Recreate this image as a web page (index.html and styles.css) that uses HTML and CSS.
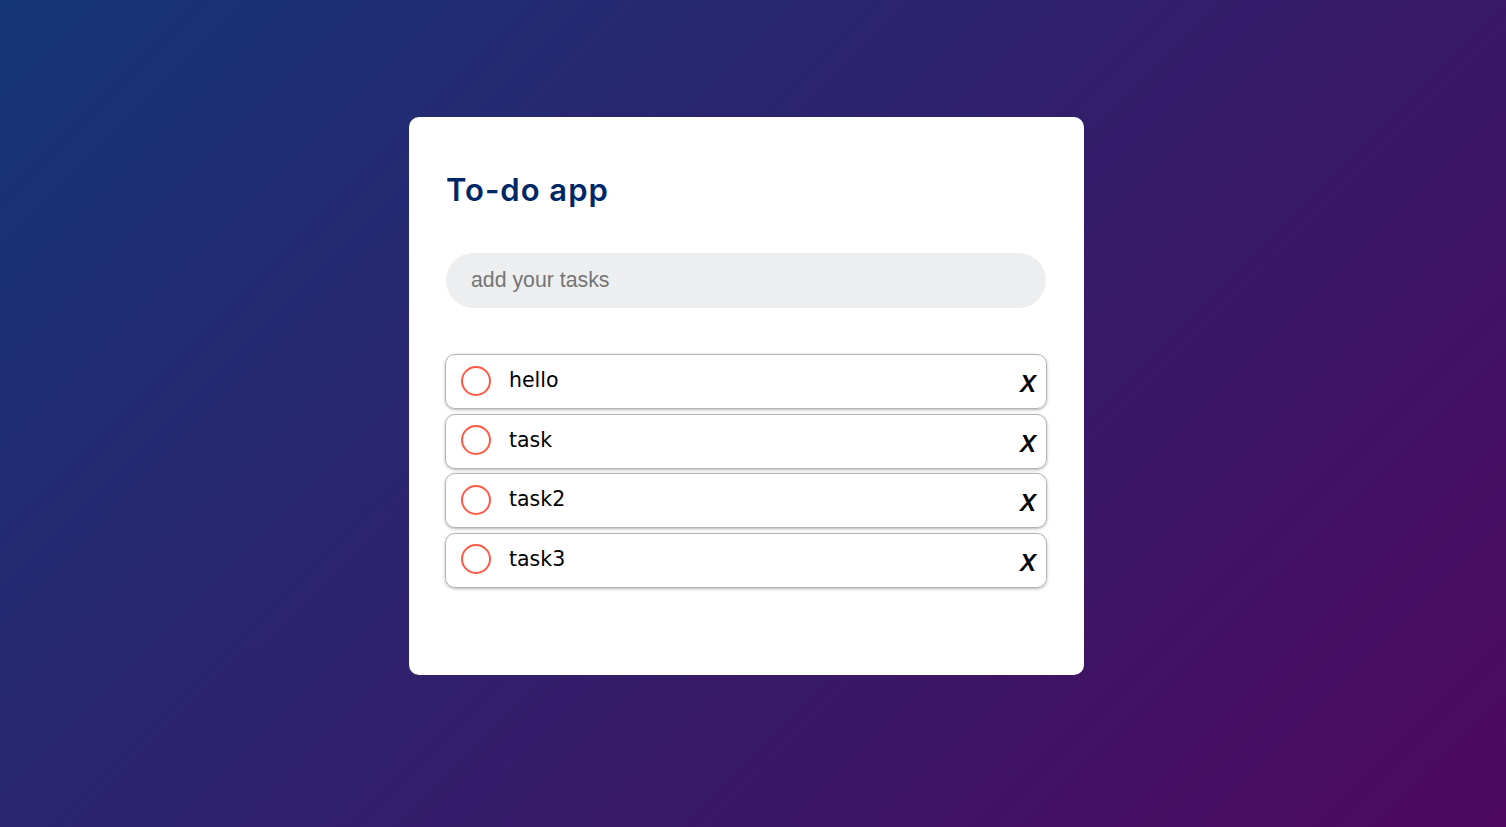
FILE: index.html
```html
<!DOCTYPE html>
<html lang="en">
<head>
<meta charset="UTF-8">
<title>To-do app</title>
<link rel="stylesheet" href="styles.css">
</head>
<body>
<div class="page">
  <div class="todo-app">
    <h2 class="title">To-do app</h2>
    <div class="row">
      <input class="task-input" type="text" placeholder="add your tasks">
    </div>
    <ul class="list">
      <li class="item"><span class="check"></span><span class="label">hello</span><span class="remove">X</span></li>
      <li class="item"><span class="check"></span><span class="label">task</span><span class="remove">X</span></li>
      <li class="item"><span class="check"></span><span class="label">task2</span><span class="remove">X</span></li>
      <li class="item"><span class="check"></span><span class="label">task3</span><span class="remove">X</span></li>
    </ul>
  </div>
</div>
</body>
</html>
```
FILE: styles.css
```css
* { box-sizing: border-box; }
html, body { margin: 0; padding: 0; height: 100%; }
body {
  background: linear-gradient(135deg, #153677, #4e085f);
  font-family: "DejaVu Sans", "Noto Sans", sans-serif;
}
.page {
  display: flex;
  justify-content: center;
  align-items: flex-start;
  padding: 117px 13px 0 0;
  min-height: 100%;
}
.todo-app {
  width: 675px;
  height: 558px;
  background: #fff;
  border-radius: 10px;
  padding: 54px 37px 86px 36px;
}
.title {
  margin: 0;
  height: 38px;
  line-height: 38px;
  font-family: "Inter", "DejaVu Sans", sans-serif;
  font-size: 31px;
  font-weight: 600;
  color: #002765;
  padding-left: 1px;
  letter-spacing: 1px;
}
.row {
  margin: 44px 1px 0 1px;
  height: 55px;
  border-radius: 28px;
  background: #edeef0;
  display: flex;
  align-items: center;
  padding-left: 25px;
}
.task-input {
  flex: 1;
  border: none;
  outline: none;
  background: transparent;
  padding: 0;
  font-family: "Liberation Sans", Arial, sans-serif;
  font-size: 21.3px;
  color: #333;
}
.task-input::placeholder { color: #757575; }
.list {
  list-style: none;
  margin: 46px 0 0 0;
  padding: 0;
  display: flex;
  flex-direction: column;
  gap: 4.67px;
}
.item {
  height: 55px;
  border: 1px solid #b5b5b5;
  border-radius: 10px;
  box-shadow: 0 1px 3px rgba(0,0,0,0.3);
  display: flex;
  align-items: center;
  padding: 0 10px 0 15px;
}
.check {
  width: 30px;
  height: 30px;
  border: 2px solid #ff5945;
  border-radius: 50%;
  flex: none;
  margin-top: -2px;
}
.label {
  flex: 1;
  margin-left: 18px;
  margin-top: -3px;
  font-size: 20.5px;
  color: #000;
}
.remove {
  font-family: "Liberation Sans", Arial, sans-serif;
  font-weight: bold;
  font-style: italic;
  font-size: 24px;
  color: #000;
  margin-top: 5px;
}
```
